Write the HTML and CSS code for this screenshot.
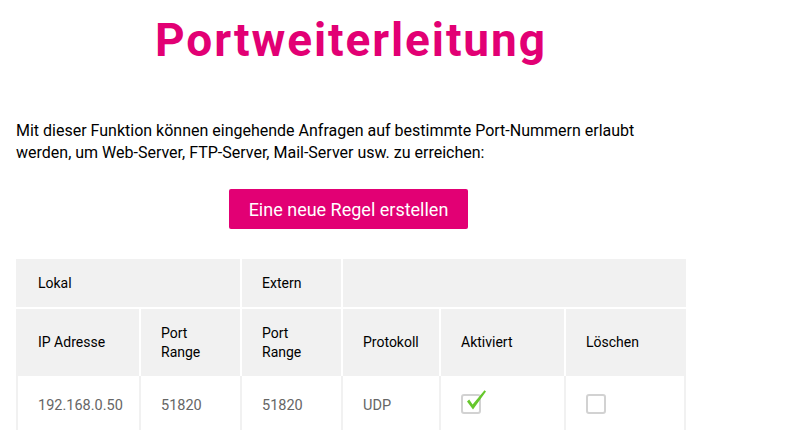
FILE: index.html
```html
<!DOCTYPE html>
<html lang="de">
<head>
<meta charset="utf-8">
<title>Portweiterleitung</title>
<link rel="stylesheet" href="styles.css">
</head>
<body>
<main class="page">
  <h1 class="title">Portweiterleitung</h1>
  <p class="intro">Mit dieser Funktion können eingehende Anfragen auf bestimmte Port-Nummern erlaubt werden, um Web-Server, FTP-Server, Mail-Server usw. zu erreichen:</p>
  <div class="actions">
    <button class="btn" type="button">Eine neue Regel erstellen</button>
  </div>
  <table class="rules">
    <colgroup>
      <col class="c1"><col class="c2"><col class="c3"><col class="c4"><col class="c5"><col class="c6">
    </colgroup>
    <thead>
      <tr class="group">
        <th colspan="2" class="first">Lokal</th>
        <th>Extern</th>
        <th colspan="3" class="last"></th>
      </tr>
      <tr class="cols">
        <th class="first">IP Adresse</th>
        <th>Port<br>Range</th>
        <th>Port<br>Range</th>
        <th>Protokoll</th>
        <th>Aktiviert</th>
        <th class="last">Löschen</th>
      </tr>
    </thead>
    <tbody>
      <tr>
        <td class="first">192.168.0.50</td>
        <td>51820</td>
        <td>51820</td>
        <td>UDP</td>
        <td>
          <span class="check">
            <svg class="tick" viewBox="0 0 24 24" width="24" height="24" aria-hidden="true">
              <path d="M3 12.5 L5.2 10.6 L8.6 15.6 L20.5 1.2 L22 2.6 L9 20.5 Z" fill="#66c72c"/>
            </svg>
          </span>
        </td>
        <td class="last"><span class="check"></span></td>
      </tr>
    </tbody>
  </table>
</main>
</body>
</html>
```
FILE: styles.css
```css
html, body {
  margin: 0;
  padding: 0;
  background: #fff;
}
body {
  font-family: Roboto, "Liberation Sans", sans-serif;
  color: #000;
}
.page {
  width: 670px;
  padding: 12px 16px 0;
}
.title {
  margin: 0;
  text-align: center;
  color: #e20074;
  font-size: 46px;
  line-height: 56px;
  font-weight: 700;
  letter-spacing: 1.9px;
}
.intro {
  margin: 52px 0 0;
  font-size: 16px;
  line-height: 22px;
}
.actions {
  display: flex;
  justify-content: center;
  margin-top: 25px;
}
.btn {
  background: #e20074;
  color: #fff;
  border: 0;
  border-radius: 2px;
  height: 40px;
  width: 239px;
  font-family: Roboto, "Liberation Sans", sans-serif;
  font-size: 18px;
  padding: 0;
  margin-left: -5px;
}
.rules {
  margin-top: 30px;
  width: 670px;
  table-layout: fixed;
  border-collapse: separate;
  border-spacing: 0;
  font-size: 14px;
}
.c1 { width: 125px; }
.c2 { width: 101px; }
.c3 { width: 101px; }
.c4 { width: 98px; }
.c5 { width: 125px; }
.c6 { width: 120px; }
.rules th {
  background: #f1f1f1;
  font-weight: 400;
  text-align: left;
  padding: 0 0 0 20px;
  border-right: 2px solid #fff;
  line-height: 19px;
  vertical-align: middle;
}
.rules th.last { border-right: 0; }
.rules th.first { padding-left: 22px; }
.group th {
  height: 48px;
  border-bottom: 2px solid #fff;
}
.cols th {
  height: 67px;
}
.rules td {
  padding: 0 0 0 20px;
  height: 58px;
  color: #666;
  border-right: 2px solid #f1f1f1;
  vertical-align: middle;
  font-size: 14.5px;
}
.rules td.first {
  border-left: 2px solid #f1f1f1;
  padding-left: 20px;
}
.check {
  position: relative;
  display: inline-block;
  width: 20px;
  height: 20px;
  box-sizing: border-box;
  border: 2px solid #d2d2d2;
  border-radius: 3px;
  vertical-align: middle;
  margin-top: -2px;
}
.tick {
  position: absolute;
  left: 1px;
  top: -7px;
}
```
